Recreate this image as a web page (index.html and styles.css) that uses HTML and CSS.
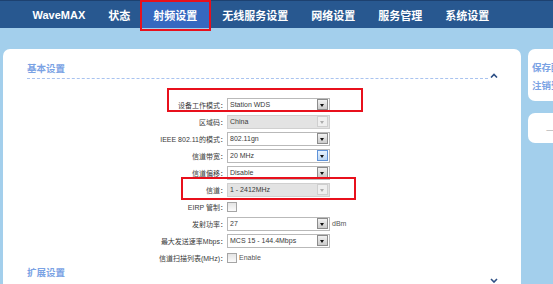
FILE: index.html
```html
<!DOCTYPE html>
<html lang="zh-CN">
<head>
    <meta charset="UTF-8">
    <title>WaveMAX - 射频设置</title>
    <link rel="stylesheet" href="styles.css">
</head>
<body>
    <header class="topnav">
        <span class="nav-item brand">WaveMAX</span>
        <span class="nav-item">状态</span>
        <span class="nav-item active">射频设置</span>
        <span class="nav-item">无线服务设置</span>
        <span class="nav-item">网络设置</span>
        <span class="nav-item">服务管理</span>
        <span class="nav-item">系统设置</span>
    </header>

    <div class="page">
        <main class="card main-card">
            <div class="section-head">
                <h3 class="section-title">基本设置</h3>
                <svg class="caret" width="8" height="5" viewBox="0 0 8 5"><polyline points="1,4.5 4,1.5 7,4.5" fill="none" stroke="#2d4f85" stroke-width="1.6"/></svg>
            </div>

            <div class="form">
                <div class="form-row">
                    <label class="form-label">设备工作模式：</label>
                    <div class="sel"><span class="sel-text">Station WDS</span><span class="sel-btn"></span></div>
                </div>
                <div class="form-row">
                    <label class="form-label">区域码：</label>
                    <div class="sel disabled"><span class="sel-text">China</span><span class="sel-btn"></span></div>
                </div>
                <div class="form-row">
                    <label class="form-label">IEEE 802.11的模式：</label>
                    <div class="sel"><span class="sel-text">802.11gn</span><span class="sel-btn"></span></div>
                </div>
                <div class="form-row">
                    <label class="form-label">信道带宽：</label>
                    <div class="sel"><span class="sel-text">20 MHz</span><span class="sel-btn hover"></span></div>
                </div>
                <div class="form-row">
                    <label class="form-label">信道偏移：</label>
                    <div class="sel"><span class="sel-text">Disable</span><span class="sel-btn"></span></div>
                </div>
                <div class="form-row">
                    <label class="form-label">信道：</label>
                    <div class="sel disabled"><span class="sel-text">1 - 2412MHz</span><span class="sel-btn"></span></div>
                </div>
                <div class="form-row">
                    <label class="form-label">EIRP 管制：</label>
                    <span class="check"></span>
                </div>
                <div class="form-row">
                    <label class="form-label">发射功率：</label>
                    <div class="sel"><span class="sel-text">27</span><span class="sel-btn"></span></div>
                    <span class="unit">dBm</span>
                </div>
                <div class="form-row">
                    <label class="form-label">最大发送速率Mbps：</label>
                    <div class="sel"><span class="sel-text">MCS 15 - 144.4Mbps</span><span class="sel-btn"></span></div>
                </div>
                <div class="form-row">
                    <label class="form-label">信道扫描列表(MHz)：</label>
                    <span class="check"></span>
                    <span class="unit">Enable</span>
                </div>
            </div>

            <div class="section-head collapsed">
                <h3 class="section-title">扩展设置</h3>
                <svg class="caret" width="8" height="5" viewBox="0 0 8 5"><polyline points="1,1 4,4 7,1" fill="none" stroke="#2d4f85" stroke-width="1.6"/></svg>
            </div>
        </main>

        <aside class="side">
            <div class="card side-card">
                <a class="side-link">保存配置</a>
                <a class="side-link">注销登录</a>
            </div>
            <div class="card side-card small">
                <span class="side-note">一</span>
            </div>
        </aside>
    </div>

    <!-- annotation boxes -->
    <div class="mark mark-nav"></div>
    <div class="mark mark-mode"></div>
    <div class="mark mark-channel"></div>
</body>
</html>
```

FILE: styles.css
```css
body {
    margin: 0;
    padding: 0;
    background-color: #a3cfec;
    font-family: "Liberation Sans", "Noto Sans CJK SC", sans-serif;
    overflow: hidden;
    height: 284px;
    position: relative;
}

.topnav {
    display: flex;
    height: 27px;
    padding-left: 21px;
    background-color: #285890;
    border-top: 1px solid #1d4170;
}

.nav-item {
    display: flex;
    align-items: center;
    padding: 0 11.5px;
    color: #fff;
    font-size: 11px;
    font-weight: bold;
    white-space: nowrap;
}

.nav-item.active {
    background-color: #3668c0;
    border-right: 2px solid #2a5290;
}

.page {
    display: flex;
    gap: 7px;
    padding: 21px 0 0 3px;
}

.card {
    background-color: #fff;
    border-radius: 7px;
}

.main-card {
    width: 471px;
    height: 300px;
    padding: 12px 23px 0 24px;
    flex-shrink: 0;
}

.section-head {
    display: flex;
    align-items: flex-end;
}

.section-title {
    flex: 1;
    margin: 0;
    padding-top: 1px;
    height: 16px;
    line-height: 14px;
    font-size: 9.5px;
    font-weight: bold;
    color: #7aa2e4;
    border-bottom: 1px dashed #a9c3ef;
}

.caret {
    margin-left: 2px;
    position: relative;
    top: -1px;
}

.section-head.collapsed {
    margin-top: -1px;
}

.section-head.collapsed .section-title {
    height: 19px;
}

.section-head.collapsed .caret {
    top: -3px;
}

.form {
    margin-top: 17px;
}

.form-row {
    display: flex;
    align-items: center;
    height: 17px;
    font-size: 7px;
    color: #3a3a3a;
}

.form-label {
    width: 200px;
    text-align: right;
    white-space: nowrap;
}

.sel {
    display: flex;
    align-items: center;
    justify-content: space-between;
    width: 101px;
    height: 12px;
    border: 1px solid #b9b9b9;
    background-color: #fff;
}

.sel-text {
    padding-left: 2px;
    white-space: nowrap;
}

.sel-btn {
    position: relative;
    width: 9px;
    height: 9px;
    margin-right: 1px;
    border: 1px solid #8c8c8c;
    background: linear-gradient(#f2f2f2, #cbcbcb);
}

.sel-btn::after {
    content: "";
    position: absolute;
    left: 2px;
    top: 4px;
    border-left: 2.5px solid transparent;
    border-right: 2.5px solid transparent;
    border-top: 3px solid #111;
}

.sel-btn.hover {
    border-color: #5f92d8;
    background: linear-gradient(#e9f3fd, #bcd7f4);
}

.sel.disabled {
    background-color: #e3e3e3;
    border-color: #d0d0d0;
}

.sel.disabled .sel-btn {
    border-color: #cfcfcf;
    background: #efefef;
}

.sel.disabled .sel-btn::after {
    border-top-color: #adadad;
}

.check {
    width: 8px;
    height: 8px;
    border: 1px solid #a5a5a5;
    background: linear-gradient(#e4e4e4, #fbfbfb);
}

.unit {
    margin-left: 2px;
    color: #555;
}

.side {
    display: flex;
    flex-direction: column;
    gap: 12px;
}

.side-card {
    width: 80px;
    height: 52px;
    padding: 10px 0 0 4px;
    box-sizing: border-box;
}

.side-link {
    display: block;
    font-size: 9.5px;
    font-weight: bold;
    color: #7aa2e4;
    line-height: 18px;
    white-space: nowrap;
}

.side-card.small {
    height: 30px;
    padding: 7px 0 0 18px;
}

.side-note {
    font-size: 9px;
    color: #b9b9b9;
}

.mark {
    position: absolute;
    border: 2px solid #e8101c;
    box-sizing: border-box;
}

.mark-nav {
    left: 140px;
    top: 0;
    width: 71px;
    height: 31px;
}

.mark-mode {
    left: 167px;
    top: 88px;
    width: 196px;
    height: 24px;
}

.mark-channel {
    left: 181px;
    top: 177px;
    width: 175px;
    height: 23px;
}
```
